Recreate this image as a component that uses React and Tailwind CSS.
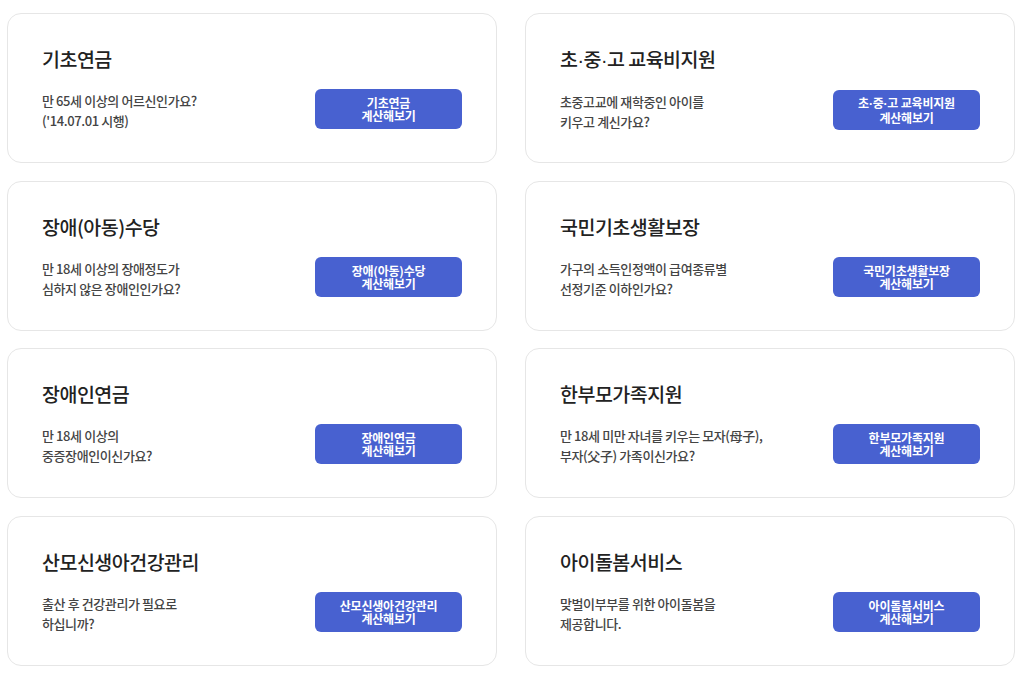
import React from 'react';

const cards = [
    { title: "기초연금", desc: ["만 65세 이상의 어르신인가요?", "('14.07.01 시행)"] },
    { title: "초·중·고 교육비지원", desc: ["초중고교에 재학중인 아이를", "키우고 계신가요?"] },
    { title: "장애(아동)수당", desc: ["만 18세 이상의 장애정도가", "심하지 않은 장애인인가요?"] },
    { title: "국민기초생활보장", desc: ["가구의 소득인정액이 급여종류별", "선정기준 이하인가요?"] },
    { title: "장애인연금", desc: ["만 18세 이상의", "중증장애인이신가요?"] },
    { title: "한부모가족지원", desc: ["만 18세 미만 자녀를 키우는 모자(母子),", "부자(父子) 가족이신가요?"] },
    { title: "산모신생아건강관리", desc: ["출산 후 건강관리가 필요로", "하십니까?"] },
    { title: "아이돌봄서비스", desc: ["맞벌이부부를 위한 아이돌봄을", "제공합니다."] },
];

// narrow middle dot, the CJK one is full width
function Dotted({ text }) {
    const parts = text.split("·");
    return parts.map((part, i) => (
        <React.Fragment key={i}>
            {i > 0 && <span style={{ fontFamily: '"Liberation Sans", sans-serif' }}>·</span>}
            {part}
        </React.Fragment>
    ));
}

export default function App() {
    return (
        <div
            className="min-h-screen bg-white pl-[7px] pt-[13px]"
            style={{ fontFamily: '"Noto Sans CJK KR", "Noto Sans", sans-serif' }}
        >
            <div className="grid grid-cols-[490px_490px] gap-x-[28px] gap-y-[17.7px]">
                {cards.map((card, index) => (
                    <div
                        key={index}
                        className="h-[150px] rounded-[14px] border border-[#e6e6e6] bg-white px-[34px] pt-[31px]"
                    >
                        <h2 className="text-[19.5px] leading-[28px] font-medium text-[#222] tracking-[-0.5px]">
                            <Dotted text={card.title} />
                        </h2>
                        <div className="mt-[16px] flex items-start justify-between">
                            <p className="pt-[2px] text-[13px] leading-[20px] font-medium text-[#444] tracking-[-0.4px]">
                                {card.desc[0]}
                                <br />
                                {card.desc[1]}
                            </p>
                            <button className="flex h-[40px] w-[147px] flex-col items-center justify-center rounded-[6px] bg-[#4861d0] text-[12px] leading-[13px] font-bold text-white tracking-[-0.2px]">
                                <span>
                                    <Dotted text={card.title} />
                                </span>
                                <span>계산해보기</span>
                            </button>
                        </div>
                    </div>
                ))}
            </div>
        </div>
    );
}
